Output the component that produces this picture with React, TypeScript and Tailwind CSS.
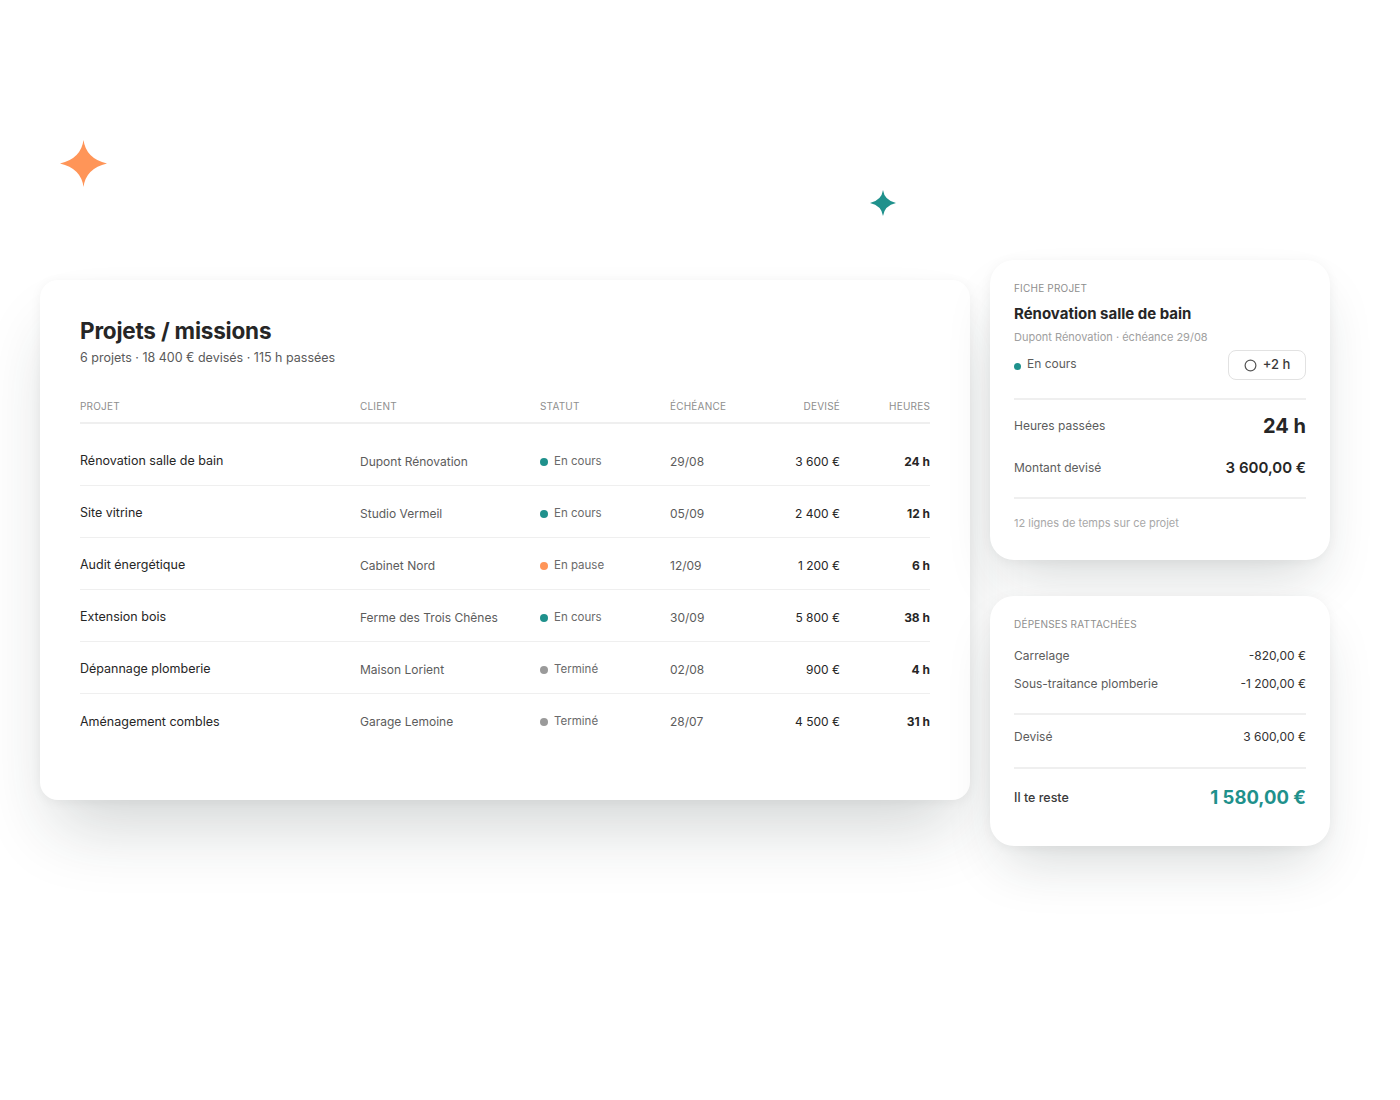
import React from "react";

const Star = ({ size, color }: { size: number; color: string }) => (
  <svg width={size} height={size} viewBox="0 0 48 48">
    <path d="M24 0 Q26.5 19 48 24 Q26.5 29 24 48 Q21.5 29 0 24 Q21.5 19 24 0Z" fill={color} />
  </svg>
);

type Row = {
  projet: string;
  client: string;
  statut: string;
  dot: string;
  date: string;
  devise: string;
  heures: string;
};

const rows: Row[] = [
  { projet: "Rénovation salle de bain", client: "Dupont Rénovation", statut: "En cours", dot: "bg-[#1f918c]", date: "29/08", devise: "3 600 €", heures: "24 h" },
  { projet: "Site vitrine", client: "Studio Vermeil", statut: "En cours", dot: "bg-[#1f918c]", date: "05/09", devise: "2 400 €", heures: "12 h" },
  { projet: "Audit énergétique", client: "Cabinet Nord", statut: "En pause", dot: "bg-[#ff9558]", date: "12/09", devise: "1 200 €", heures: "6 h" },
  { projet: "Extension bois", client: "Ferme des Trois Chênes", statut: "En cours", dot: "bg-[#1f918c]", date: "30/09", devise: "5 800 €", heures: "38 h" },
  { projet: "Dépannage plomberie", client: "Maison Lorient", statut: "Terminé", dot: "bg-[#9a9a9a]", date: "02/08", devise: "900 €", heures: "4 h" },
  { projet: "Aménagement combles", client: "Garage Lemoine", statut: "Terminé", dot: "bg-[#9a9a9a]", date: "28/07", devise: "4 500 €", heures: "31 h" },
];

const grid = "grid grid-cols-[280px_180px_130px_90px_80px_90px] items-center";

export default function App() {
  return (
    <div
      className="relative w-[1400px] h-[1100px] bg-white overflow-hidden text-[#2b2b2b]"
      style={{ fontFamily: "Inter, 'Noto Sans', sans-serif" }}
    >
      <div className="absolute left-[60px] top-[140px]">
        <Star size={47} color="#ff9558" />
      </div>
      <div className="absolute left-[870px] top-[190px]">
        <Star size={26} color="#1f918c" />
      </div>

      <div className="flex items-start gap-[20px] pl-[40px] pt-[260px]">
        {/* Main card */}
        <div className="mt-[20px] w-[930px] h-[520px] bg-white rounded-[18px] px-[40px] pt-[37px] shadow-[0_40px_70px_-15px_rgba(30,45,45,0.2),0_2px_12px_rgba(0,0,0,0.05)]">
          <h1 className="text-[22.5px] leading-[28px] font-bold text-[#262626] tracking-[-0.2px]">Projets / missions</h1>
          <p className="mt-[3px] text-[12.5px] leading-[20px] text-[#5a5a5a]">
            6 projets · 18 400 € devisés · 115 h passées
          </p>

          <div className={`${grid} mt-[31px] pb-[9px] border-b-2 border-[#efefef] text-[10px] leading-[14px] tracking-[0.2px] text-[#8e8e8e] uppercase`}>
            <div>Projet</div>
            <div>Client</div>
            <div>Statut</div>
            <div>Échéance</div>
            <div className="text-right">Devisé</div>
            <div className="text-right">Heures</div>
          </div>

          <div className="mt-[10px]">
            {rows.map((r, i) => (
              <div
                key={r.projet}
                className={`${grid} h-[52px] pt-[4px] ${i < rows.length - 1 ? "border-b border-[#efefef]" : ""} text-[12px]`}
              >
                <div className="text-[12.5px] text-[#262626]">{r.projet}</div>
                <div className="text-[#5c5c5c]">{r.client}</div>
                <div className="flex items-center gap-[6px] text-[11.5px] text-[#6a6a6a]">
                  <span className={`w-[8px] h-[8px] rounded-full ${r.dot}`} />
                  {r.statut}
                </div>
                <div className="text-[#5c5c5c]">{r.date}</div>
                <div className="text-right text-[#262626]">{r.devise}</div>
                <div className="text-right font-bold text-[#262626]">{r.heures}</div>
              </div>
            ))}
          </div>
        </div>

        {/* Right column */}
        <div className="w-[340px] flex flex-col gap-[36px]">
          <div className="bg-white rounded-[24px] px-[24px] pt-[22px] pb-[29px] shadow-[0_28px_55px_-14px_rgba(30,45,45,0.18),0_2px_12px_rgba(0,0,0,0.05)]">
            <div className="text-[10px] leading-[12px] tracking-[0.2px] text-[#8e8e8e] uppercase">Fiche projet</div>
            <div className="mt-[10px] text-[15px] leading-[20px] font-bold text-[#262626]">Rénovation salle de bain</div>
            <div className="mt-[5px] text-[11px] leading-[16px] text-[#a0a0a0]">Dupont Rénovation · échéance 29/08</div>
            <div className="mt-[5px] flex items-center justify-between h-[30px]">
              <div className="flex items-center gap-[6px] text-[12px] text-[#5c5c5c]">
                <span className="w-[7px] h-[7px] rounded-full bg-[#1f918c] mt-[3px]" />
                <span className="-mt-[2px]">En cours</span>
              </div>
              <div className="w-[78px] h-[30px] rounded-[8px] border border-[#e2e2e2] flex items-center justify-center gap-[6px] text-[13px] font-medium text-[#3a3a3a]">
                <svg width="13" height="13" viewBox="0 0 14 14">
                  <circle cx="7" cy="7" r="5.8" fill="none" stroke="#555" strokeWidth="1.3" />
                </svg>
                +2 h
              </div>
            </div>
            <div className="mt-[18px] border-t-2 border-[#efefef]" />
            <div className="mt-[12px] h-[28px] flex items-center justify-between">
              <span className="text-[12px] text-[#5c5c5c]">Heures passées</span>
              <span className="text-[20px] font-bold text-[#262626]">24 h</span>
            </div>
            <div className="mt-[16px] h-[24px] flex items-center justify-between">
              <span className="text-[12px] text-[#5c5c5c]">Montant devisé</span>
              <span className="text-[15px] font-semibold text-[#262626]">3 600,00 €</span>
            </div>
            <div className="mt-[17px] border-t-2 border-[#efefef]" />
            <div className="mt-[16px] text-[11px] leading-[16px] text-[#a8a8a8]">12 lignes de temps sur ce projet</div>
          </div>

          <div className="bg-white rounded-[24px] px-[24px] pt-[22px] pb-[34px] shadow-[0_28px_55px_-14px_rgba(30,45,45,0.18),0_2px_12px_rgba(0,0,0,0.05)]">
            <div className="text-[10px] leading-[12px] tracking-[0.2px] text-[#8e8e8e] uppercase">Dépenses rattachées</div>
            <div className="mt-[16px] h-[20px] flex items-center justify-between text-[12px]">
              <span className="text-[#5c5c5c]">Carrelage</span>
              <span className="text-[#333]">-820,00 €</span>
            </div>
            <div className="mt-[8px] h-[20px] flex items-center justify-between text-[12px]">
              <span className="text-[#5c5c5c]">Sous-traitance plomberie</span>
              <span className="text-[#333]">-1 200,00 €</span>
            </div>
            <div className="mt-[19px] border-t-2 border-[#efefef]" />
            <div className="mt-[12px] h-[20px] flex items-center justify-between text-[12px]">
              <span className="text-[#5c5c5c]">Devisé</span>
              <span className="text-[#333]">3 600,00 €</span>
            </div>
            <div className="mt-[20px] border-t-2 border-[#efefef]" />
            <div className="mt-[15px] h-[28px] flex items-center justify-between">
              <span className="text-[12.5px] font-medium text-[#3a3a3a]">Il te reste</span>
              <span className="text-[18.5px] font-bold text-[#1f918c]">1 580,00 €</span>
            </div>
          </div>
        </div>
      </div>
    </div>
  );
}
